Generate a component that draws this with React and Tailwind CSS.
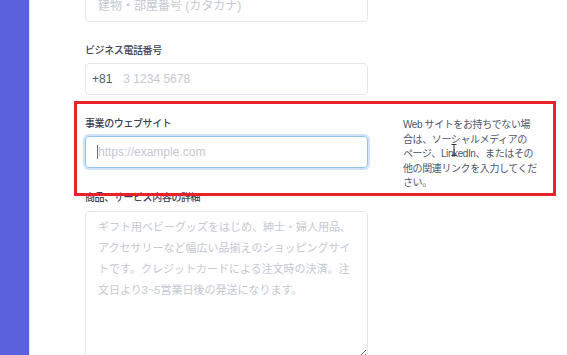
import React from "react";

const font = { fontFamily: '"Liberation Sans", "Noto Sans CJK JP", sans-serif' };

function Label({ children }) {
  return (
    <div className="h-4 leading-4 mb-[4px] text-[10px] tracking-[-0.4px] font-medium text-[#3c4257]">
      {children}
    </div>
  );
}

export default function App() {
  return (
    <div className="relative w-full h-[355px] flex bg-white overflow-hidden" style={font}>
      {/* Sidebar strip */}
      <div className="w-[30px] shrink-0 bg-[#5b60dc] border-r border-[#e4e7fb]" />

      <div className="pl-[55px] -mt-[10px] flex flex-col">
        {/* Address line 2 */}
        <div className="w-[283px] mb-[21px]">
          <input
            readOnly
            placeholder="建物・部屋番号 (カタカナ)"
            className="w-full h-8 px-3 rounded border border-[#e3e8ee] text-[12px] text-[#3c4257] placeholder:text-[#c4c9d1] outline-none"
          />
        </div>

        {/* Phone */}
        <div className="w-[283px] mb-[21px]">
          <Label>ビジネス電話番号</Label>
          <div className="flex items-center h-8 px-[6px] rounded border border-[#e3e8ee] text-[12px]">
            <span className="text-[#4f566b] mr-[11px]">+81</span>
            <input
              readOnly
              placeholder="3 1234 5678"
              className="flex-1 min-w-0 text-[12px] text-[#3c4257] placeholder:text-[#c4c9d1] outline-none"
            />
          </div>
        </div>

        {/* Website */}
        <div className="flex items-start h-[52px] mb-[22px]">
          <div className="w-[283px]">
            <Label>事業のウェブサイト</Label>
            <div className="relative">
              <input
                readOnly
                placeholder="https://example.com"
                className="w-full h-8 px-3 rounded border border-[#94c4ee] shadow-[0_0_0_2px_#cfe4f8] text-[12px] placeholder:text-[#c4c9d1] outline-none"
              />
              <span className="absolute left-[12px] top-[9px] w-px h-[14px] bg-[#6b7280]" />
            </div>
          </div>
          <div className="relative ml-[35px] mt-[2px] text-[10px] tracking-[-0.4px] leading-[14.5px] text-[#4f566b] whitespace-nowrap">
            Web サイトをお持ちでない場
            <br />
            合は、ソーシャルメディアの
            <br />
            ページ、LinkedIn、またはその
            <br />
            他の関連リンクを入力してくだ
            <br />
            さい。
            {/* mouse I-beam cursor */}
            <svg className="absolute left-[48px] top-[26px]" width="6" height="12" viewBox="0 0 6 12">
              <path d="M0.5 0.5h5M3 0.5v11M0.5 11.5h5" stroke="#333" strokeWidth="1" fill="none" />
            </svg>
          </div>
        </div>

        {/* Description */}
        <div className="w-[283px]">
          <div className="h-4 leading-4 mb-[5px] text-[10px] tracking-[-0.4px] font-medium text-[#3c4257]">
            商品、サービス内容の詳細
          </div>
          <textarea
            readOnly
            placeholder="ギフト用ベビーグッズをはじめ、紳士・婦人用品、アクセサリーなど幅広い品揃えのショッピングサイトです。クレジットカードによる注文時の決済。注文日より3~5営業日後の発送になります。"
            className="block w-full h-[148px] px-3 pt-[5px] rounded border border-[#e3e8ee] text-[11px] leading-[21px] placeholder:text-[#c4c9d1] outline-none"
            style={font}
          />
        </div>
      </div>

      {/* Highlight annotation */}
      <div className="absolute left-[74px] top-[101px] w-[482px] h-[95px] border-[3px] border-[#e8212a] pointer-events-none" />
    </div>
  );
}
